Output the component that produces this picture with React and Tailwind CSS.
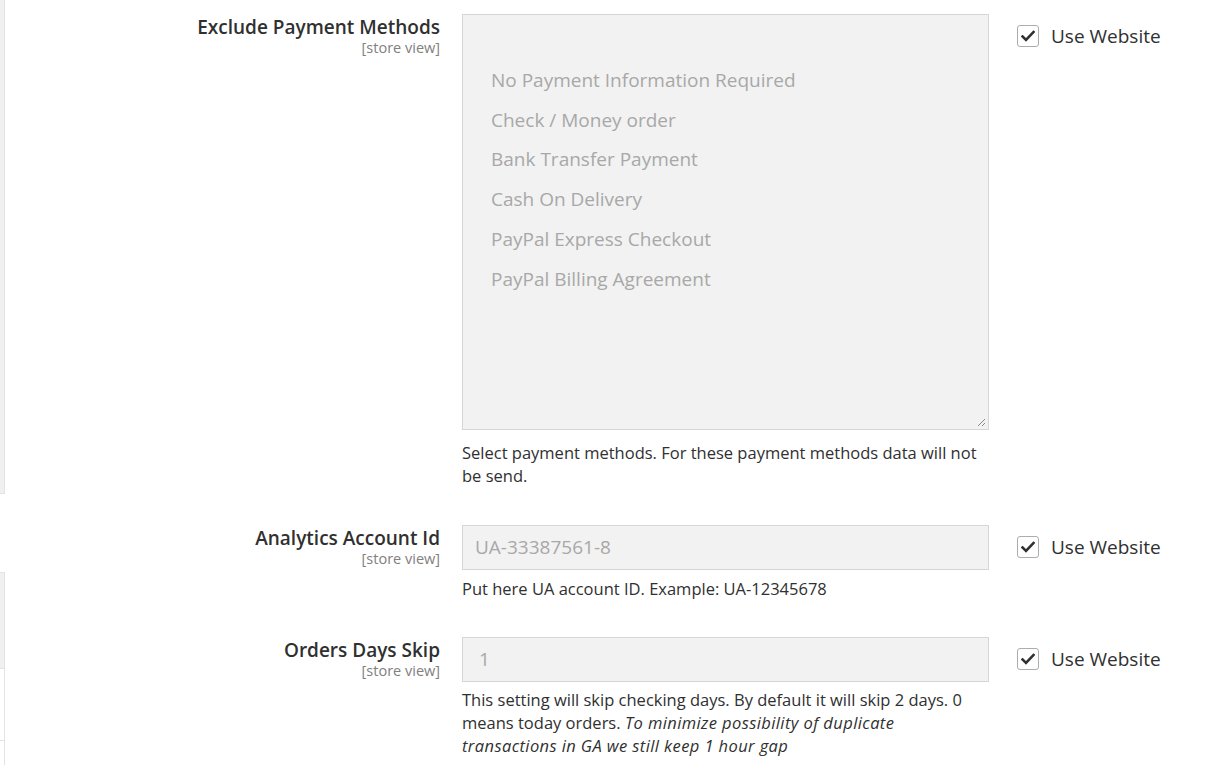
import React from "react";

const paymentMethods = [
  "No Payment Information Required",
  "Check / Money order",
  "Bank Transfer Payment",
  "Cash On Delivery",
  "PayPal Express Checkout",
  "PayPal Billing Agreement",
];

function UseWebsite() {
  return (
    <label className="flex items-center gap-3 pt-[10px] text-[19px] leading-6 text-[#303030]">
      <span className="flex h-[22px] w-[22px] items-center justify-center rounded-[3px] border border-[#adadad] bg-white">
        <svg width="14" height="12" viewBox="0 0 14 12" fill="none">
          <path d="M1.5 6.5 L5 10 L12.5 2" stroke="#303030" strokeWidth="2.6" strokeLinecap="square" />
        </svg>
      </span>
      <span>Use Website</span>
    </label>
  );
}

function FieldLabel({ title }) {
  return (
    <div className="w-[435px] shrink-0 pt-px text-right">
      <div className="text-[19px] font-semibold leading-6 text-[#303030]">{title}</div>
      <div className="text-[14.5px] leading-[18px] text-[#808080]">[store view]</div>
    </div>
  );
}

export default function App() {
  return (
    <div
      className="flex min-h-[765px] bg-white"
      style={{ fontFamily: '"Open Sans", "Liberation Sans", sans-serif' }}
    >
      {/* left edge of the neighbouring panel */}
      <div className="flex w-[5px] shrink-0 flex-col">
        <div className="h-[494px] border-r border-b border-[#e3e3e3] bg-[#f0f0f0]" />
        <div className="h-[78px]" />
        <div className="h-[97px] border-t border-r border-b border-[#e3e3e3] bg-[#f0f0f0]" />
        <div className="h-[72px] border-r border-b border-[#e3e3e3]" />
        <div className="flex-1 border-r border-[#e3e3e3]" />
      </div>

      <div className="flex flex-col pt-[14px]">
        {/* Exclude Payment Methods */}
        <div className="flex">
          <FieldLabel title="Exclude Payment Methods" />
          <div className="ml-[22px] w-[527px] shrink-0">
            <div className="relative h-[416px] border border-[#d6d6d6] bg-[#f2f2f2] pl-[28px] pt-[46px]">
              {paymentMethods.map((m) => (
                <div key={m} className="text-[19px] leading-[39.7px] text-[#a8a8a8]">
                  {m}
                </div>
              ))}
              <svg className="absolute right-[2px] bottom-[2px]" width="10" height="10" viewBox="0 0 10 10">
                <path d="M9 2 L2 9 M9 6 L6 9" stroke="#8a8a8a" strokeWidth="1" />
              </svg>
            </div>
            <p className="mt-[11px] text-[16.5px] leading-[23px] text-[#303030]">
              Select payment methods. For these payment methods data will not be send.
            </p>
          </div>
          <div className="ml-[28px]">
            <UseWebsite />
          </div>
        </div>

        {/* Analytics Account Id */}
        <div className="mt-[38px] flex">
          <FieldLabel title="Analytics Account Id" />
          <div className="ml-[22px] w-[527px] shrink-0">
            <div className="flex h-[45px] items-center border border-[#d6d6d6] bg-[#f2f2f2] px-3 text-[19px] text-[#a8a8a8]">
              UA-33387561-8
            </div>
            <p className="mt-[7px] text-[16.5px] leading-[23px] text-[#303030]">
              Put here UA account ID. Example: UA-12345678
            </p>
          </div>
          <div className="ml-[28px]">
            <UseWebsite />
          </div>
        </div>

        {/* Orders Days Skip */}
        <div className="mt-[37px] flex">
          <FieldLabel title="Orders Days Skip" />
          <div className="ml-[22px] w-[527px] shrink-0">
            <div className="flex h-[45px] items-center border border-[#d6d6d6] bg-[#f2f2f2] px-4 text-[19px] text-[#a8a8a8]">
              1
            </div>
            <p className="mt-[6px] text-[16.5px] leading-[23px] text-[#303030]">
              This setting will skip checking days. By default it will skip 2 days. 0 means today orders.{" "}
              <em className="tracking-[0.4px]">
                To minimize possibility of duplicate transactions in GA we still keep 1 hour gap
              </em>
            </p>
          </div>
          <div className="ml-[28px]">
            <UseWebsite />
          </div>
        </div>
      </div>
    </div>
  );
}
